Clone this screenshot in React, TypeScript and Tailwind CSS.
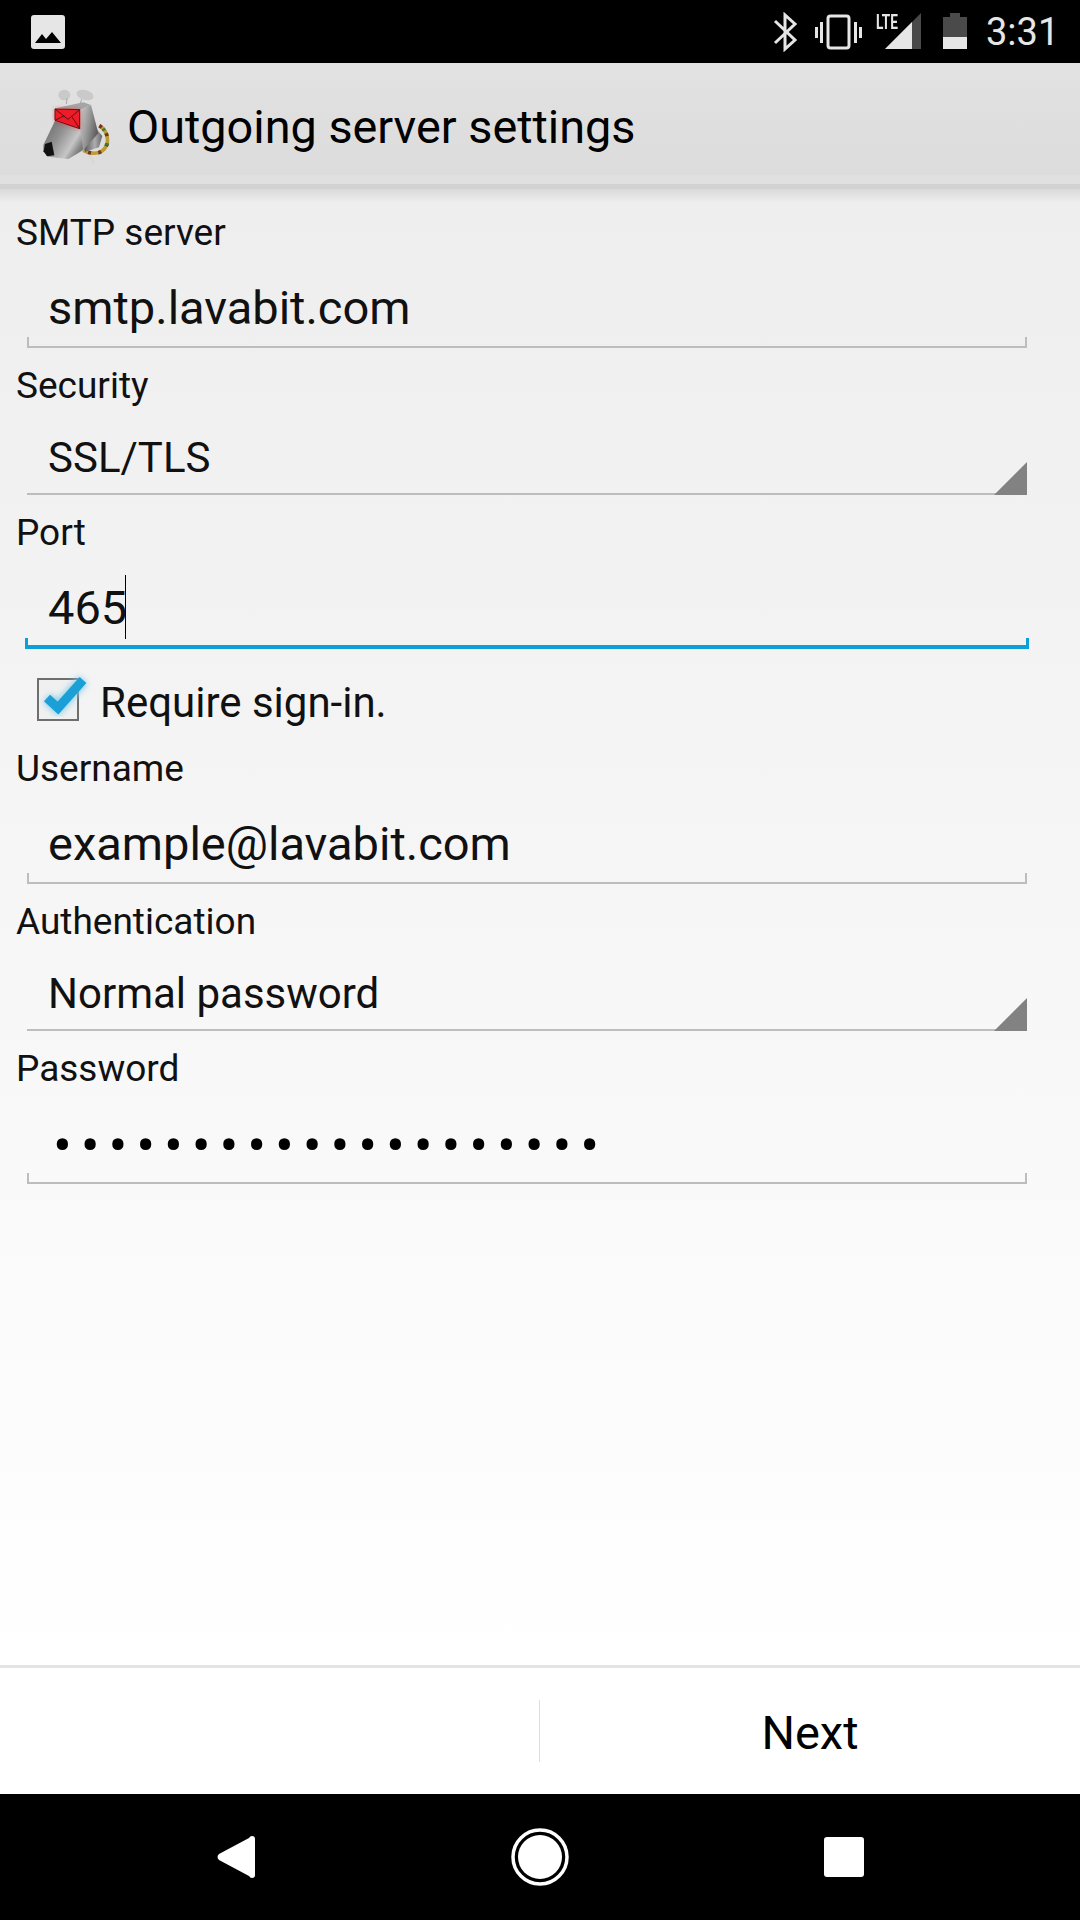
import React from "react";

const roboto = { fontFamily: "Roboto, sans-serif" };

const StatusBar = () => (
  <div className="relative h-[63px] shrink-0 bg-black">
    <svg className="absolute left-[31px] top-[15px]" width="34" height="34" viewBox="0 0 34 34">
      <rect width="34" height="34" rx="3" fill="#e6e6e6" />
      <path d="M4 28 L11 19 L15 24 L21 17 L30 28 Z" fill="#000" />
    </svg>
    <svg className="absolute left-[770px] top-[12px]" width="290" height="40" viewBox="770 12 290 40">
      {/* bluetooth */}
      <path d="M775 21 L795 40 L785 49 V15 L795 24 L775 43" fill="none" stroke="#e6e6e6" strokeWidth="3" />
      {/* vibrate */}
      <rect x="828" y="16" width="21" height="32" rx="2.5" fill="none" stroke="#e6e6e6" strokeWidth="3" />
      <path d="M815 27h3v11h-3zM820 22h3v21h-3zM854 22h3v21h-3zM859 27h3v11h-3z" fill="#e6e6e6" />
      {/* signal */}
      <path d="M885 49 L921 13 V49 Z" fill="#4a4a4a" />
      <path d="M885 49 L912 22 V49 Z" fill="#e6e6e6" />
      {/* battery */}
      <path d="M943 17 h7 v-4 h10 v4 h7 v32 h-24 Z" fill="#4a4a4a" />
      <rect x="943" y="37" width="24" height="12" fill="#e6e6e6" />
    </svg>
    <span className="absolute left-[876px] top-[11px] origin-left scale-x-[0.68] text-[20px] leading-[22px] font-bold text-[#e6e6e6]" style={roboto}>
      LTE
    </span>
    <span className="absolute left-[986px] top-[10px] text-[38px] leading-[44px] text-[#e6e6e6]" style={roboto}>
      3:31
    </span>
  </div>
);

// drawn in the coordinates of a 3x crop of the toolbar
const Logo = () => (
  <svg className="mb-[4px] shrink-0" width="80" height="90" viewBox="0 0 240 270">
    <defs>
      <linearGradient id="front" x1="0" y1="0" x2="1" y2="0.6">
        <stop offset="0" stopColor="#666666" />
        <stop offset="0.45" stopColor="#8f8f8f" />
        <stop offset="0.8" stopColor="#c6c6c6" />
        <stop offset="1" stopColor="#7d7d7d" />
      </linearGradient>
      <linearGradient id="side" x1="0" y1="0" x2="1" y2="0.4">
        <stop offset="0" stopColor="#d8d8d8" />
        <stop offset="0.6" stopColor="#949494" />
        <stop offset="1" stopColor="#5f5f5f" />
      </linearGradient>
      <linearGradient id="neck" x1="0" y1="0" x2="1" y2="0">
        <stop offset="0" stopColor="#4f4f4f" />
        <stop offset="0.6" stopColor="#adadad" />
        <stop offset="1" stopColor="#666666" />
      </linearGradient>
      <filter id="envGlow" x="-30%" y="-30%" width="160%" height="160%">
        <feGaussianBlur stdDeviation="6" />
      </filter>
    </defs>
    <ellipse cx="88" cy="45" rx="18" ry="16" fill="#c9c9c9" />
    <ellipse cx="150" cy="45" rx="26" ry="15" fill="#c9c9c9" transform="rotate(15 150 45)" />
    <path d="M96 55 L94 72 M140 58 L135 72" stroke="#a8a8a8" strokeWidth="3" />
    <path d="M165 225 L175 247" stroke="#d8d8d8" strokeWidth="9" strokeLinecap="round" />
    <path d="M193 137 C222 155 226 195 201 213 C185 224 160 220 145 211" fill="none" stroke="#b79f35" strokeWidth="11" />
    <path d="M193 137 C222 155 226 195 201 213 C185 224 160 220 145 211" fill="none" stroke="#7c3020" strokeWidth="11" strokeDasharray="9 22" />
    <path d="M193 137 C222 155 226 195 201 213" fill="none" stroke="#3f7a3a" strokeWidth="11" strokeDasharray="7 40" strokeDashoffset="-14" />
    <path d="M180 142 L202 168 L192 202 L150 216 L145 190 Z" fill="url(#neck)" />
    <path d="M62 85 L145 67 L168 75 L135 90 Z" fill="#a5a5a5" />
    <path d="M135 90 L168 75 L190 160 L145 210 L130 150 Z" fill="url(#side)" />
    <path d="M60 122 L135 147 L145 210 L100 237 L40 230 L25 215 L25 195 Z" fill="url(#front)" />
    <path d="M30 192 L50 185 L58 226 L36 229 L26 214 Z" fill="#111" />
    <path d="M60 87 L134 89 L134 146 L60 121 Z" fill="#ff2020" opacity="0.75" filter="url(#envGlow)" />
    <path d="M60 87 L134 89 L134 146 L60 121 Z" fill="#ee1c28" stroke="#5c1015" strokeWidth="3" />
    <path d="M60 87 L99 118 L134 89 M60 121 L88 107 M134 146 L110 109" fill="none" stroke="#5c1015" strokeWidth="3" />
  </svg>
);

const AppBar = () => (
  <div className="shrink-0">
    <div className="flex h-[112px] items-center bg-gradient-to-b from-[#e2e2e2] to-[#dcdcdc] pt-[16px] pl-[35px]">
      <Logo />
      <span className="ml-[12px] text-[46.8px] text-black" style={roboto}>
        Outgoing server settings
      </span>
    </div>
    <div className="h-[9px] bg-[#e0e0e0]" />
    <div className="h-[5px] bg-[#d2d2d2]" />
    <div className="h-[14px] bg-gradient-to-b from-[#dadada] to-[#eeeeee]" />
  </div>
);

const Label = ({ text, className }: { text: string; className: string }) => (
  <div className={`pt-[1px] pl-[16px] text-[37px] leading-[46px] text-[#111] ${className}`} style={roboto}>
    {text}
  </div>
);

const FieldLine = ({ focus }: { focus?: boolean }) =>
  focus ? (
    <div className="ml-[25px] h-[11px] w-[1004px] border-x-[3px] border-b-[4px] border-[#0d9fd8]" />
  ) : (
    <div className="ml-[27px] h-[11px] w-[1000px] border-x-2 border-b-2 border-[#bdbdbd]" />
  );

const SelectLine = () => (
  <div className="relative ml-[27px] h-[2px] w-[1000px] bg-[#bdbdbd]">
    <div className="absolute bottom-0 right-0 h-[33px] w-[33px] bg-[#828282] [clip-path:polygon(100%_0,100%_100%,0_100%)]" />
  </div>
);

const Field = ({ label, value, mt }: { label: string; value: string; mt: string }) => (
  <div>
    <Label text={label} className={mt} />
    <div className="flex h-[81px] items-center pl-[48px] pt-[24px] text-[47px] text-[#111]" style={roboto}>
      {value}
    </div>
    <FieldLine />
  </div>
);

const Select = ({ label, value, mt }: { label: string; value: string; mt: string }) => (
  <div>
    <Label text={label} className={mt} />
    <div className="flex h-[84px] items-center pl-[48px] pt-[13px] text-[42px] text-[#111]" style={roboto}>
      {value}
    </div>
    <SelectLine />
  </div>
);

const Check = () => (
  <svg className="mb-[12px]" width="56" height="50" viewBox="0 0 56 50">
    <defs>
      <filter id="glow" x="-30%" y="-30%" width="160%" height="160%">
        <feGaussianBlur stdDeviation="3" />
      </filter>
    </defs>
    <rect x="1" y="8" width="40" height="41" fill="#f0f0f0" stroke="#6e6e6e" strokeWidth="2" />
    <path d="M10 27 L21 37 L46 9" fill="none" stroke="#7fcdea" strokeWidth="11" filter="url(#glow)" />
    <path d="M10 27 L21 37 L46 9" fill="none" stroke="#1a9fd6" strokeWidth="9" />
  </svg>
);

const App = () => {
  return (
    <div className="flex h-[1920px] w-[1080px] flex-col overflow-hidden bg-white">
      <StatusBar />
      <AppBar />
      <div className="flex-1 bg-gradient-to-b from-[#eeeeee] to-white">
        <Field label="SMTP server" value="smtp.lavabit.com" mt="mt-[6px]" />
        <Select label="Security" value="SSL/TLS" mt="mt-[14px]" />

        {/* port has focus */}
        <Label text="Port" className="mt-[14px]" />
        <div className="flex h-[82px] items-center pl-[48px] pt-[22px] text-[47px] text-[#111]" style={roboto}>
          465
          <span className="-mt-[3px] -ml-[2px] h-[64px] w-[1px] bg-black" />
        </div>
        <FieldLine focus />

        <div className="mt-[23px] flex h-[60px] items-center pl-[37px]">
          <Check />
          <span className="ml-[7px] text-[42px] text-[#111]" style={roboto}>
            Require sign-in.
          </span>
        </div>

        <Field label="Username" value="example@lavabit.com" mt="mt-[13px]" />
        <Select label="Authentication" value="Normal password" mt="mt-[14px]" />

        <Label text="Password" className="mt-[14px]" />
        <div className="flex h-[81px] items-center pl-[53px] pt-[27px] text-[56px] tracking-[8.85px] text-black" style={roboto}>
          ••••••••••••••••••••
        </div>
        <FieldLine />
      </div>

      <div className="h-[3px] shrink-0 bg-[#e4e4e4]" />
      <div className="flex h-[126px] shrink-0 items-center bg-white">
        <div className="h-[62px] w-[540px] border-r border-[#dedede]" />
        <div className="flex-1 pt-[4px] text-center text-[47px] text-black" style={roboto}>
          Next
        </div>
      </div>

      <div className="flex h-[126px] shrink-0 items-center justify-center bg-black">
        <svg width="1080" height="126" viewBox="0 1794 1080 126">
          <path d="M252 1836 Q255 1836 255 1839 V1875 Q255 1878 252 1878 Q250 1878 249 1876 L219 1860 Q216 1857 219 1854 L249 1838 Q250 1836 252 1836 Z" fill="#fff" />
          <circle cx="540" cy="1857" r="27" fill="none" stroke="#fff" strokeWidth="3.5" />
          <circle cx="540" cy="1857" r="22" fill="#fff" />
          <rect x="824" y="1837" width="40" height="40" rx="3" fill="#fff" />
        </svg>
      </div>
    </div>
  );
};

export default App;
